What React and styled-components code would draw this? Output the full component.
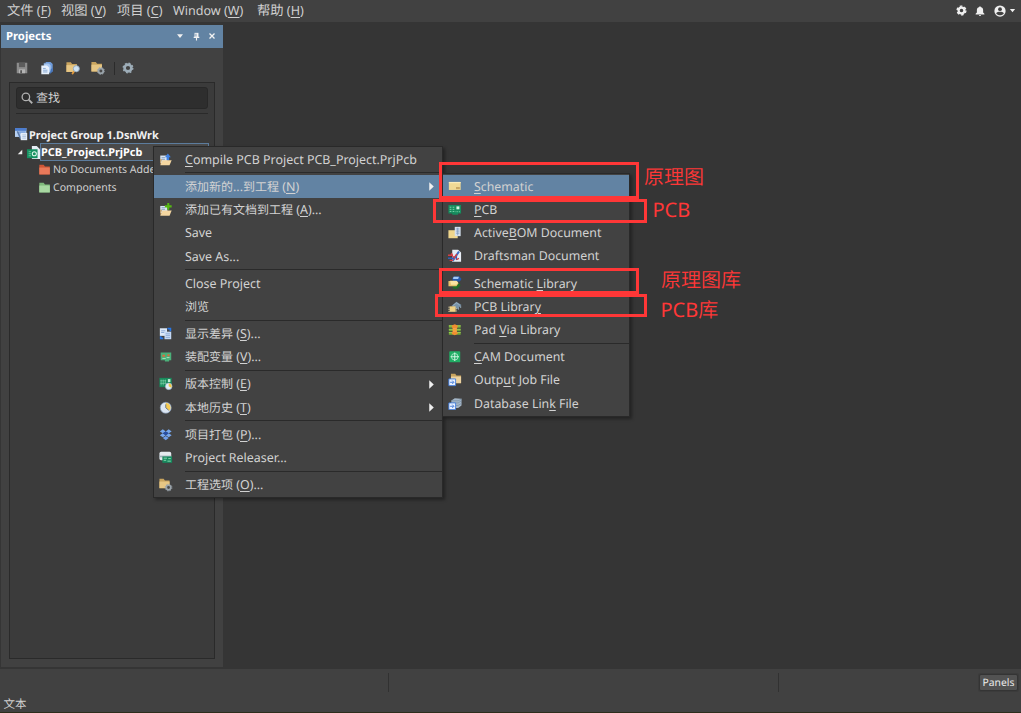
import React from "react";
import styled, { createGlobalStyle, css } from "styled-components";

const GlobalStyle = createGlobalStyle`
  * {
    box-sizing: border-box;
  }
  body {
    margin: 0;
    overflow: hidden;
    background: #353535;
    color: #d0d0d0;
    font-family: "Noto Sans", "Noto Sans CJK SC", sans-serif;
    text-rendering: geometricPrecision;
  }
`;

/* ---------- icons ---------- */

const Folder = ({ x = 0, y = 0, color = "#e6c684", dark = "#c9a45e" }) => (
  <g transform={`translate(${x} ${y})`}>
    <path d="M0 0h5l1.5 2H12v9H0z" fill={dark} />
    <path d="M0 3.2h12V11H0z" fill={color} />
  </g>
);

const icons = {
  save: (
    <>
      <path d="M2 2h12v12H2z" fill="#8d8d8d" />
      <path d="M4.5 2h7v5h-7z" fill="#5c5c5c" />
      <path d="M4.5 9.5h7V14h-7z" fill="#b4b4b4" />
      <path d="M6 10.5h2V14H6z" fill="#555" />
    </>
  ),
  copyDocs: (
    <>
      <path d="M6.5 1H12l2.5 2.5V12h-8z" fill="#6f9ddd" />
      <path d="M4.5 2.5H10L12.500 5V13h-8z" fill="#a9c8f1" stroke="#6f94c8" strokeWidth=".5" />
      <path d="M1.5 5H8l2.500 2.500V15h-9z" fill="#e8f1fc" />
      <path d="M3.500 8.500h3M3.500 10.500h5M3.500 12.500h5" stroke="#7fa1cf" />
      <path d="M12.500 9l2-1v4l-3.500 3" fill="#4574ba" />
    </>
  ),
  folderFind: (
    <>
      <Folder x={0.5} y={1.5} />
      <path d="M9.500 11.500l-2.500 3.500" stroke="#e39a3c" strokeWidth="2" />
      <circle cx="11.800" cy="8.800" r="3.500" fill="#cde1f2" stroke="#8ca4ba" />
    </>
  ),
  folderGear: (
    <>
      <Folder x={0.5} y={1} />
      <circle cx="11.300" cy="11.300" r="2.700" fill="#4a4a4a" stroke="#9aa4ab" strokeWidth="2" />
      <circle cx="11.300" cy="11.300" r="4" fill="none" stroke="#9aa4ab" strokeWidth="1" strokeDasharray="1.600 1.540" />
    </>
  ),
  gear: (
    <>
      <circle cx="8" cy="8" r="3.900" fill="none" stroke="#9dadb8" strokeWidth="3" />
      <circle cx="8" cy="8" r="5.500" fill="none" stroke="#9dadb8" strokeWidth="1.500" strokeDasharray="2.160 2.160" />
    </>
  ),
  search: (
    <>
      <circle cx="6.500" cy="6.500" r="5" fill="none" stroke="#b2b2b2" strokeWidth="1.700" />
      <path d="M10.200 10.200l4.800 4.800" stroke="#b2b2b2" strokeWidth="2.400" />
    </>
  ),
  group: (
    <>
      <path d="M0 0h14v11H0z" fill="#b7d0f2" />
      <path d="M0 0h14v3.500H0z" fill="#4d7dce" />
      <path d="M3 4l4 9" stroke="#5b7aa9" strokeWidth="2" />
      <path d="M5 4h8v3H5z" fill="#7ea4dc" />
      <path d="M7 6h8v9H7z" fill="#e4edf8" />
      <path d="M9 8.500h4.500M9 10.500h4.500M9 12.500h4.500" stroke="#a5bcdb" />
    </>
  ),
  project: (
    <>
      <path d="M6 0h6l4 4v12H6z" fill="#e6eef5" />
      <path d="M0 4h13v11H0z" fill="#159061" />
      <path d="M2 7h3M2 9.500h3M2 12h3" stroke="#76d1a6" />
      <circle cx="9" cy="9.500" r="2.500" fill="none" stroke="#dff7eb" strokeWidth="1.300" />
    </>
  ),
  redFolder: <Folder x={1.5} y={2} color="#e9795a" dark="#cf5636" />,
  greenFolder: <Folder x={1.5} y={2} color="#a8d8a2" dark="#7fba7c" />,
  compile: (
    <>
      <path d="M1.500 3H10v9H1.500z" fill="#d7e4f3" />
      <path d="M3 5.500h4M3 7.500h4" stroke="#7c97b8" />
      <path d="M9 9V5H7L10.500 .5l3.500 4.500h-2v4z" fill="#3d80e3" />
      <path d="M1.500 14.500V7.500h2z" fill="#c99a55" />
      <path d="M1.500 14.500L4 8.500h11l-2.500 6z" fill="#f4d6a0" />
    </>
  ),
  addDoc: (
    <>
      <path d="M1.500 3.500H10V12H1.500z" fill="#d7e4f3" />
      <path d="M3 5.500h4M3 7.500h4" stroke="#7c97b8" />
      <path d="M1.500 15V8h2z" fill="#c99a55" />
      <path d="M1.500 15L4 9h11l-2.500 6z" fill="#f4d6a0" />
      <path d="M11 0v8M7 4h8" stroke="#55b913" strokeWidth="2.400" />
    </>
  ),
  diff: (
    <>
      <path d="M1 1.500h8.500v9H1z" fill="#dce9f9" />
      <path d="M2.500 4.500h5M2.500 6.500h4" stroke="#7c9ed0" />
      <path d="M6.500 5.500h8V14.500h-8z" fill="#c4d9f4" />
      <path d="M8 8h5M8 10h5M8 12.500h5" stroke="#8daad6" />
      <path d="M10 2h3.500v3M5 13.500H2v-2.500" fill="none" stroke="#2877e6" strokeWidth="2" />
    </>
  ),
  variant: (
    <>
      <path d="M2 3h12.500v9H12v1.500H7V12H2z" fill="#4bb079" />
      <path d="M4 5.500h3v2.500H4zM10 5h2.500v2.500H10z" fill="#e0693c" />
      <path d="M4 10h4M9 9h3.500" stroke="#b9e9ca" />
    </>
  ),
  version: (
    <>
      <path d="M.5 1h14.500v11H.5z" fill="#188a5b" />
      <path d="M2.500 3v7M5 3v7M7.500 3v5M1.500 4.500h7M1.500 7.500h7" stroke="#8fdab5" strokeWidth=".7" />
      <path d="M10.500 2.500h3v3.500h-3z" fill="#c1efd6" />
      <circle cx="11.500" cy="11" r="4" fill="#e2edf7" stroke="#8ba7bc" strokeWidth=".7" />
      <path d="M11.500 11V7.600A3.400 3.400 0 0 1 14.500 12.800z" fill="#f1c645" />
    </>
  ),
  history: (
    <>
      <circle cx="8" cy="8" r="6.500" fill="#dce6f2" stroke="#8298b2" strokeWidth=".8" />
      <path d="M8 8V2.200a5.800 5.800 0 0 1 4.500 9.400z" fill="#f4ca52" />
      <path d="M8 4v4l3.500 3" stroke="#596779" fill="none" />
    </>
  ),
  pack: (
    <>
      <path d="M4.500 1.500L8 4 4.500 6.300 1 4zM11.500 1.500L15 4l-3.500 2.300L8 4zM4.500 6.300L8 8.600l-3.500 2.300L1 8.600zM11.500 6.300L15 8.600l-3.500 2.300L8 8.600z" fill="#78a8ee" />
      <path d="M8 9.500l3.500 2.300L8 14.500l-3.500-2.700z" fill="#6f9fec" />
      <path d="M8 4l3.500 2.300L8 8.600 4.500 6.300z" fill="#244eaa" />
    </>
  ),
  releaser: (
    <>
      <rect x=".5" y="1" width="14" height="10" rx="2" fill="#e4eaee" />
      <path d="M.5 5.500h14v2H.5z" fill="#9fb1b9" />
      <path d="M4 6.500h11.500V14H4z" fill="#178a5e" />
      <path d="M5.500 8.500h4M5.500 11h3M11 9h3M10 12h4" stroke="#9de1bd" />
    </>
  ),
  schematic: (
    <>
      <path d="M1 3.500h14v9.500H1z" fill="#efd995" />
      <path d="M1 3.500h14v1.500H1z" fill="#f9ebbb" />
      <path d="M9.500 9.500h4.500V12H9.500z" fill="#c8a765" />
    </>
  ),
  pcb: (
    <>
      <path d="M.5 2.500h15V12.500h-3.500v1.300H5V12.500H.5z" fill="#168b5d" />
      <path d="M2 5h2M2 7.500h2M2 10h2M5.500 5h2M5.500 7.500h2M5.500 10h2" stroke="#8de2b7" />
      <path d="M10 4h3.500v3.500H10z" fill="#d9f5e6" />
      <path d="M9 10.300h5" stroke="#8de2b7" strokeDasharray="1 1" />
    </>
  ),
  bom: (
    <>
      <path d="M.5 5h11v9.500H.5z" fill="#efd68c" />
      <path d="M8 1h7v11H8z" fill="#d5e0ee" />
      <path d="M9.500 3.500h4M9.500 6h4M9.500 8.500h4M11.500 2v9" stroke="#7591b5" strokeWidth=".8" />
    </>
  ),
  draftsman: (
    <>
      <path d="M5 1h7l3.500 3V15H5z" fill="#e8edf5" />
      <path d="M5.500 14L13 3" stroke="#396bc6" strokeWidth="2.400" />
      <path d="M0 7.500h6M4 5l3 6 3.500-5" stroke="#d63e43" strokeWidth="1.700" fill="none" />
      <path d="M0 11h7M10 8.500V13" stroke="#2f60ba" strokeWidth="1.600" />
      <path d="M2 13.500h4M10 12.500l3-1.500" stroke="#d63e43" strokeWidth="1.600" />
    </>
  ),
  schLib: (
    <>
      <path d="M5 2.500L7.500 .5h6L16 3.500l-2 3H6z" fill="#2459ad" />
      <path d="M6.500 1h6.500l-1 2.500H6z" fill="#a3c9f5" />
      <path d="M5 10.500l8-2 2 2.500-4 4H6z" fill="#1f6e28" />
      <path d="M.5 6h10l2 2.500-2.500 3.500H.5z" fill="#e5c26b" />
      <path d="M2.500 5.500h7.500l2 2.500-2 2.500H3.500z" fill="#f8e4a2" />
    </>
  ),
  pcbLib: (
    <>
      <path d="M4 7l6-5 6 4-5 5z" fill="#7893a8" />
      <path d="M6 6.500l4-3L14 6" stroke="#9cb3c4" fill="none" />
      <path d="M12.500 9v2.500M15 7v2.500" stroke="#9cb3c4" />
      <path d="M2 7.500h7V14H2z" fill="#eed083" />
      <path d="M.5 8.500H2M.5 11H2M.5 13.500H2M9 10.500h1.500M9 13h1.500" stroke="#f8e7b2" />
    </>
  ),
  padVia: (
    <>
      <path d="M1 2.500h14v3H1zM1 6.700h14v3H1zM1 10.800h14v3H1z" fill="#71a937" />
      <path d="M1 3.500h14M1 7.500h14M1 11.300h14" stroke="#a1d05c" />
      <path d="M4.500 3L8 1.500 11.500 3v2l-1 1v4.500l1 1V13L8 14.500 4.500 13v-1.500l1-1V6l-1-1z" fill="#f18e30" />
      <path d="M5.500 7h5M5.500 9.500h5" stroke="#ffc565" strokeWidth=".8" />
    </>
  ),
  cam: (
    <>
      <rect x="1.500" y="1.500" width="13" height="13" rx="1" fill="#20ad64" />
      <circle cx="8" cy="8" r="3.900" fill="none" stroke="#dcfaea" strokeWidth=".8" />
      <path d="M8 3v10M3 8h10" stroke="#dcfaea" strokeWidth="1.100" />
    </>
  ),
  outputJob: (
    <>
      <Folder x={3.500} y={1} color="#ecd2a0" />
      <path d="M1 7h8v8H1z" fill="#e9f1fe" stroke="#3877dd" />
      <path d="M2.500 11h4M5 9l2 2-2 2" stroke="#2f6ed4" fill="none" />
    </>
  ),
  database: (
    <>
      <path d="M4 4l4-2.500 8 .5v8l-4 3H4z" fill="#a4b6c7" />
      <path d="M4 4.500h8l4-2M4 7h8l4-2.500M9 10h3l4-2.500" stroke="#7d93a8" fill="none" />
      <path d="M1 7h8v8H1z" fill="#e9f1fe" stroke="#3877dd" />
      <path d="M2.500 11h4M5 9l2 2-2 2" stroke="#2f6ed4" fill="none" />
    </>
  ),
  settings: (
    <>
      <circle cx="8" cy="8" r="4.200" fill="none" stroke="#f0f0f0" strokeWidth="3.200" />
      <circle cx="8" cy="8" r="6.400" fill="none" stroke="#f0f0f0" strokeWidth="2" strokeDasharray="3.800 2.902" />
    </>
  ),
  bell: (
    <path d="M8 .5a1.200 1.200 0 0 1 1.200 1.100C11.700 2.200 13 4 13 6.500v4l2 2v1H1v-1l2-2v-4c0-2.500 1.300-4.300 3.800-4.900A1.200 1.200 0 0 1 8 .5zM6.300 14.200h3.400a1.700 1.700 0 0 1-3.400 0z" fill="#f0f0f0" />
  ),
  user: (
    <>
      <circle cx="8" cy="8" r="7.500" fill="#f0f0f0" />
      <circle cx="8" cy="5.500" r="2.500" fill="#414141" />
      <path d="M2.800 11C4 9.300 6 9 8 9s4 .3 5.200 2C12 13 10 13.700 8 13.700S4 13 2.800 11z" fill="#414141" />
    </>
  ),
  pin: (
    <>
      <path d="M4.500 1.500h7V9h-7z" fill="#f3f3f3" />
      <path d="M3 9.500h10M8 10v5" stroke="#f3f3f3" strokeWidth="2" />
      <path d="M7 3v5" stroke="#6283a3" strokeWidth="1.500" />
    </>
  ),
  close: <path d="M3 3l10 10M13 3L3 13" stroke="#f3f3f3" strokeWidth="2.600" />,
  down: <path d="M2 4.500h12L8 12z" fill="#f0f0f0" />,
  right: <path d="M4 .5L12 8l-8 7.500z" fill="#f0f0f0" />,
  expanded: <path d="M14 2v12H2z" fill="#f0f0f0" />,
};

const Svg = styled.svg`
  display: block;
  flex: none;
  width: ${(p) => p.$size}px;
  height: ${(p) => p.$size}px;
`;

const Icon = ({ name, size = 14 }) => (
  <Svg viewBox="0 0 16 16" $size={size}>
    {icons[name]}
  </Svg>
);

/* ---------- text ---------- */

const Cjk = styled.span`
  font-family: "Noto Sans CJK SC", sans-serif;
  font-size: 12px;
  line-height: 1;
`;

const Mnemonic = styled.span`
  text-decoration: underline;
  text-underline-offset: 1.5px;
  text-decoration-thickness: 1px;
`;

// "&" stands before the letter that is the keyboard mnemonic
const Label = ({ text }) =>
  text.split(/(&.|[\u4e00-\u9fff]+)/).map((part, i) => {
    if (part.startsWith("&")) return <Mnemonic key={i}>{part[1]}</Mnemonic>;
    if (/[\u4e00-\u9fff]/.test(part)) return <Cjk key={i}>{part}</Cjk>;
    return part;
  });

/* ---------- layout ---------- */

const Window = styled.div`
  position: relative;
  display: flex;
  flex-direction: column;
  width: 1021px;
  height: 713px;
  overflow: hidden;
  background: #353535;
`;

const MenuBar = styled.header`
  display: flex;
  align-items: center;
  height: 22px;
  padding: 0 5px 0 7px;
  background: #414141;
  font-size: 12.6px;
  white-space: pre;
`;

const MenuBarItem = styled.div`
  width: ${(p) => p.$width}px;
  line-height: 22px;

  ${Cjk} {
    font-size: 13.3px;
  }
`;

const Tools = styled.div`
  display: flex;
  align-items: center;
  margin-left: auto;
  padding-bottom: 1px;
`;

const Tool = styled.div`
  margin-left: ${(p) => p.$gap}px;
`;

const Workspace = styled.main`
  flex: 1;
  padding: 3px 0 2px 1px;
`;

const Panel = styled.section`
  display: flex;
  flex-direction: column;
  width: 222px;
  height: 642px;
  background: #414141;
`;

const PanelHeader = styled.div`
  display: flex;
  align-items: center;
  height: 23px;
  padding: 0 7px 1px 5px;
  background: #6283a3;
  color: #fff;
  font-size: 11.3px;
  font-weight: 700;
`;

const PanelTools = styled.div`
  display: flex;
  align-items: center;
  gap: 7.5px;
  margin-left: auto;
`;

const Toolbar = styled.div`
  display: flex;
  align-items: center;
  gap: 11.4px;
  height: 34px;
  padding: 6px 0 0 14px;
`;

const ToolbarDivider = styled.div`
  width: 1px;
  height: 13px;
  margin: 0 -5px 0 -3px;
  background: #2b2b2b;
`;

const Tree = styled.div`
  flex: 1;
  width: 206px;
  margin: 0 0 8px 8px;
  padding: 4px 5px;
  border: 1px solid #2a2a2a;
  background: #3b3b3b;
`;

const SearchBox = styled.div`
  display: flex;
  align-items: center;
  gap: 3px;
  width: 192px;
  height: 22px;
  margin-left: 1px;
  padding-left: 4px;
  border: 1px solid #282828;
  border-radius: 3px;
  background: #2e2e2e;
  font-size: 12px;
`;

const TreeDivider = styled.div`
  height: 1px;
  margin: 4px 0 11.6px 1px;
  width: 192px;
  background: #2a2a2a;
`;

const TreeRow = styled.div`
  display: flex;
  align-items: center;
  height: 17.7px;
  padding-left: ${(p) => p.$indent}px;
  font-size: 10.55px;
  white-space: nowrap;
`;

const TreeLabel = styled.div`
  flex: 1;
  height: 17.7px;
  line-height: 17px;
  border: 1px solid transparent;
  ${(p) =>
    p.$bold &&
    css`
      color: #f0f0f0;
      font-size: 10.95px;
      font-weight: 700;
    `}
  ${(p) =>
    p.$selected &&
    css`
      border-color: #5c7c9d;
      background: #4a4a4a;
      color: #fff;
    `}
`;

const StatusBar = styled.footer`
  display: flex;
  flex-direction: column;
  height: 44px;
  background: #414141;
  border-bottom: 1px solid #2d2d1c;
`;

const StatusRow = styled.div`
  display: grid;
  grid-template-columns: 389px 390px 1fr 42px;
  height: 27px;
  align-items: center;
`;

const StatusCell = styled.div`
  height: 19px;
  border-right: ${(p) => (p.$last ? 0 : 1)}px solid #313131;
`;

const PanelsButton = styled.div`
  width: 39px;
  height: 17px;
  margin-bottom: 1px;
  border: 1px solid #343434;
  border-radius: 2px;
  background: #525252;
  box-shadow: 0 0 0 1px #3b3b3b;
  color: #ececec;
  font-size: 10.3px;
  line-height: 16px;
  text-align: center;
`;

const StatusText = styled.div`
  padding-left: 3.5px;
  font-size: 12px;
  line-height: 16px;

  ${Cjk} {
    font-size: 11.5px;
  }
`;

/* ---------- menus ---------- */

const Menu = styled.div`
  position: absolute;
  left: ${(p) => p.$left}px;
  top: ${(p) => p.$top}px;
  width: ${(p) => p.$width}px;
  padding: ${(p) => p.$padTop}px 0 0.6px;
  border: 1px solid #292929;
  background: #424242;
  box-shadow: 2px 2px 3px rgba(0, 0, 0, 0.35);
`;

const MenuRow = styled.div`
  display: flex;
  align-items: center;
  height: 23.3px;
  padding: 0 6px 0 5px;
  font-size: ${(p) => p.$fontSize}px;
  white-space: pre;
  color: #d2d2d2;
  background: ${(p) => (p.$active ? "#6283a3" : "transparent")};
`;

const IconSlot = styled.div`
  width: ${(p) => p.$width}px;
  flex: none;
`;

const MenuText = styled.div`
  flex: 1;
  padding-bottom: 0.4px;
`;

const Separator = styled.div`
  height: 1px;
  margin: 1.4px 0 1.4px ${(p) => p.$inset}px;
  background: #2a2a2a;
`;

const MenuItems = ({ items, slot, fontSize }) =>
  items.map((item, i) =>
    item === null ? (
      <Separator key={i} $inset={slot + 5} />
    ) : (
      <MenuRow key={i} $active={item.active} $fontSize={fontSize}>
        <IconSlot $width={slot}>{item.icon && <Icon name={item.icon} size={13.5} />}</IconSlot>
        <MenuText>
          <Label text={item.text} />
        </MenuText>
        {item.sub && <Icon name="right" size={9} />}
      </MenuRow>
    )
  );

const projectMenu = [
  { icon: "compile", text: "&Compile PCB Project PCB_Project.PrjPcb" },
  null,
  { text: "添加新的...到工程 (&N)", active: true, sub: true },
  { icon: "addDoc", text: "添加已有文档到工程 (&A)..." },
  { text: "Save" },
  { text: "Save As..." },
  null,
  { text: "Close Project" },
  { text: "浏览" },
  null,
  { icon: "diff", text: "显示差异 (&S)..." },
  { icon: "variant", text: "装配变量 (&V)..." },
  null,
  { icon: "version", text: "版本控制 (&E)", sub: true },
  { icon: "history", text: "本地历史 (&T)", sub: true },
  null,
  { icon: "pack", text: "项目打包 (&P)..." },
  { icon: "releaser", text: "Project Releaser..." },
  null,
  { icon: "folderGear", text: "工程选项 (&O)..." },
];

const addNewMenu = [
  { icon: "schematic", text: "&Schematic", active: true },
  { icon: "pcb", text: "&PCB" },
  { icon: "bom", text: "Active&BOM Document" },
  { icon: "draftsman", text: "Draftsman Document" },
  null,
  { icon: "schLib", text: "Schematic &Library" },
  { icon: "pcbLib", text: "PCB Librar&y" },
  { icon: "padVia", text: "Pad &Via Library" },
  null,
  { icon: "cam", text: "&CAM Document" },
  { icon: "outputJob", text: "Outp&ut Job File" },
  { icon: "database", text: "Database Lin&k File" },
];

/* ---------- callouts ---------- */

const Frame = styled.div`
  position: absolute;
  left: ${(p) => p.$x}px;
  top: ${(p) => p.$y}px;
  width: ${(p) => p.$w}px;
  height: ${(p) => p.$h}px;
  border: 3px solid #ff3737;
`;

const Note = styled.div`
  position: absolute;
  left: ${(p) => p.$x}px;
  top: ${(p) => p.$y}px;
  color: #ff3737;
  font-size: 20px;
  line-height: 24px;
  white-space: nowrap;

  ${Cjk} {
    font-size: 20px;
    font-weight: 350;
  }
`;

const App = () => {
  return (
    <Window>
      <GlobalStyle />
      <MenuBar>
        <MenuBarItem $width={54}>
          <Label text="文件 (&F)" />
        </MenuBarItem>
        <MenuBarItem $width={56}>
          <Label text="视图 (&V)" />
        </MenuBarItem>
        <MenuBarItem $width={56}>
          <Label text="项目 (&C)" />
        </MenuBarItem>
        <MenuBarItem $width={84}>
          <Label text="Window (&W)" />
        </MenuBarItem>
        <MenuBarItem $width={60}>
          <Label text="帮助 (&H)" />
        </MenuBarItem>
        <Tools>
          <Tool $gap={0}>
            <Icon name="settings" size={11} />
          </Tool>
          <Tool $gap={8}>
            <Icon name="bell" size={10} />
          </Tool>
          <Tool $gap={9}>
            <Icon name="user" size={12} />
          </Tool>
          <Tool $gap={3}>
            <Icon name="down" size={7} />
          </Tool>
        </Tools>
      </MenuBar>

      <Workspace>
        <Panel>
          <PanelHeader>
            Projects
            <PanelTools>
              <Icon name="down" size={8} />
              <Icon name="pin" size={9} />
              <Icon name="close" size={8} />
            </PanelTools>
          </PanelHeader>
          <Toolbar>
            <Icon name="save" />
            <Icon name="copyDocs" />
            <Icon name="folderFind" />
            <Icon name="folderGear" />
            <ToolbarDivider />
            <Icon name="gear" />
          </Toolbar>
          <Tree>
            <SearchBox>
              <Icon name="search" size={12} />
              <Label text="查找" />
            </SearchBox>
            <TreeDivider />
            <TreeRow $indent={0}>
              <Icon name="group" size={13} />
              <TreeLabel $bold>Project Group 1.DsnWrk</TreeLabel>
            </TreeRow>
            <TreeRow $indent={2}>
              <Icon name="expanded" size={6} />
              <IconSlot $width={4} />
              <Icon name="project" size={13} />
              <TreeLabel $bold $selected>
                PCB_Project.PrjPcb
              </TreeLabel>
            </TreeRow>
            <TreeRow $indent={23}>
              <Icon name="redFolder" size={14} />
              <TreeLabel>No Documents Added</TreeLabel>
            </TreeRow>
            <TreeRow $indent={23}>
              <Icon name="greenFolder" size={14} />
              <TreeLabel>Components</TreeLabel>
            </TreeRow>
          </Tree>
        </Panel>
      </Workspace>

      <StatusBar>
        <StatusRow>
          <StatusCell />
          <StatusCell />
          <StatusCell $last />
          <PanelsButton>Panels</PanelsButton>
        </StatusRow>
        <StatusText>
          <Label text="文本" />
        </StatusText>
      </StatusBar>

      <Menu $left={153} $top={146} $width={290} $padTop={0.7}>
        <MenuItems items={projectMenu} slot={26} fontSize={12.45} />
      </Menu>
      <Menu $left={442} $top={173} $width={188} $padTop={0.6}>
        <MenuItems items={addNewMenu} slot={26} fontSize={12.35} />
      </Menu>

      <Frame $x={439} $y={162} $w={200} $h={37} />
      <Frame $x={433} $y={199} $w={214} $h={24} />
      <Frame $x={439} $y={268} $w={200} $h={26} />
      <Frame $x={435} $y={294} $w={212} $h={23} />
      <Note $x={644} $y={165}>
        <Label text="原理图" />
      </Note>
      <Note $x={652.5} $y={198}>PCB</Note>
      <Note $x={661} $y={268}>
        <Label text="原理图库" />
      </Note>
      <Note $x={660.5} $y={298}>
        <Label text="PCB库" />
      </Note>
    </Window>
  );
};

export default App;
